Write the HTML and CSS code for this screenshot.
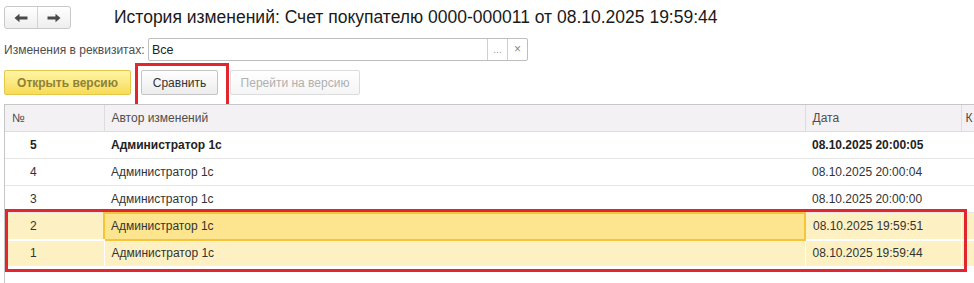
FILE: index.html
```html
<!DOCTYPE html>
<html>
<head>
    <meta charset="UTF-8">
    <title>История изменений</title>
    <link rel="stylesheet" href="styles.css">
</head>
<body>
    <div class="page">
        <!-- header: navigation and title -->
        <div class="top-bar">
            <div class="nav-group">
                <button class="nav-btn">
                    <svg width="14" height="10" viewBox="0 0 14 10"><path d="M0.5 5 L5.5 0.8 L5.5 3.6 L13.5 3.6 L13.5 6.4 L5.5 6.4 L5.5 9.2 Z" fill="#4a4a4a"/></svg>
                </button>
                <button class="nav-btn">
                    <svg width="14" height="10" viewBox="0 0 14 10"><path d="M13.5 5 L8.5 0.8 L8.5 3.6 L0.5 3.6 L0.5 6.4 L8.5 6.4 L8.5 9.2 Z" fill="#4a4a4a"/></svg>
                </button>
            </div>
            <h1 class="title">История изменений: Счет покупателю 0000-000011 от 08.10.2025 19:59:44</h1>
        </div>

        <div class="field-row">
            <label class="field-label">Изменения в реквизитах:</label>
            <div class="field-box">
                <span class="field-value">Все</span>
                <span class="field-btn dots">...</span>
                <span class="field-btn clear">×</span>
            </div>
        </div>

        <div class="toolbar">
            <button class="btn btn-default">Открыть версию</button>
            <div class="marked">
                <button class="btn">Сравнить</button>
                <div class="red-box compare-box"></div>
            </div>
            <button class="btn btn-disabled">Перейти на версию</button>
        </div>

        <div class="grid-wrap">
            <table class="grid">
                <colgroup>
                    <col style="width:99px">
                    <col style="width:701px">
                    <col style="width:156px">
                    <col style="width:14px">
                </colgroup>
                <thead>
                    <tr>
                        <th>№</th>
                        <th>Автор изменений</th>
                        <th>Дата</th>
                        <th class="cut">К</th>
                    </tr>
                </thead>
                <tbody>
                    <tr class="bold">
                        <td class="num">5</td>
                        <td>Администратор 1с</td>
                        <td>08.10.2025 20:00:05</td>
                        <td></td>
                    </tr>
                    <tr>
                        <td class="num">4</td>
                        <td>Администратор 1с</td>
                        <td>08.10.2025 20:00:04</td>
                        <td></td>
                    </tr>
                    <tr>
                        <td class="num">3</td>
                        <td>Администратор 1с</td>
                        <td>08.10.2025 20:00:00</td>
                        <td></td>
                    </tr>
                    <tr class="selected">
                        <td class="num">2</td>
                        <td class="current">Администратор 1с</td>
                        <td>08.10.2025 19:59:51</td>
                        <td></td>
                    </tr>
                    <tr class="selected">
                        <td class="num">1</td>
                        <td>Администратор 1с</td>
                        <td>08.10.2025 19:59:44</td>
                        <td></td>
                    </tr>
                </tbody>
            </table>
            <div class="red-box rows-box"></div>
        </div>
    </div>
</body>
</html>
```

FILE: styles.css
```css
html, body {
    margin: 0;
    padding: 0;
    background: #fff;
    overflow: hidden;
}
body {
    font: 12px "Liberation Sans", Arial, sans-serif;
    color: #333;
}
.page {
    padding: 6px 0 0 4px;
    height: 277px;
}

/* top bar */
.top-bar {
    display: flex;
    align-items: center;
    height: 23px;
}
.nav-group {
    display: flex;
    width: 67px;
    height: 23px;
    box-sizing: border-box;
    border: 1px solid #c9c9c9;
    border-radius: 3px;
    background: linear-gradient(#ffffff, #eeeeee);
}
.nav-btn {
    flex: 1;
    border: none;
    background: none;
    padding: 0;
    display: flex;
    align-items: center;
    justify-content: center;
}
.nav-btn + .nav-btn {
    border-left: 1px solid #d4d4d4;
}
.title {
    margin: 0 0 0 43px;
    font-size: 17.5px;
    font-weight: normal;
    color: #1a1a1a;
    white-space: nowrap;
}

/* requisites field */
.field-row {
    display: flex;
    align-items: center;
    margin-top: 9px;
    height: 23px;
}
.field-label {
    width: 144px;
    color: #4d4d4d;
    white-space: nowrap;
}
.field-box {
    display: flex;
    width: 380px;
    height: 23px;
    box-sizing: border-box;
    border: 1px solid #bdbdbd;
    border-radius: 2px;
}
.field-value {
    flex: 1;
    padding: 4px 3px 0 3px;
    color: #222;
    font-size: 12.5px;
}
.field-btn {
    width: 19px;
    border-left: 1px solid #d0d0d0;
    color: #999;
    text-align: center;
    font-size: 10px;
    line-height: 21px;
}
.field-btn.clear {
    font-size: 12px;
    color: #888;
}

/* buttons */
.toolbar {
    display: flex;
    align-items: center;
    margin-top: 9px;
    height: 25px;
}
.btn {
    height: 25px;
    box-sizing: border-box;
    border: 1px solid #c4c4c4;
    border-radius: 2px;
    background: linear-gradient(#ffffff, #ececec);
    font: 12px "Liberation Sans", Arial, sans-serif;
    color: #333;
    padding: 0;
    width: 77px;
}
.btn-default {
    width: 127px;
    border-color: #e3c84a;
    background: linear-gradient(#fff4a8, #f7dc55);
    color: #8f8136;
    font-weight: bold;
    margin-right: 10px;
}
.btn-disabled {
    width: 130px;
    margin-left: 12px;
    border-color: #dcdcdc;
    background: linear-gradient(#ffffff, #f5f5f5);
    color: #b0b0b0;
}
.marked {
    position: relative;
}
.red-box {
    position: absolute;
    box-sizing: border-box;
    border: 3px solid #e3262d;
    pointer-events: none;
}
.compare-box {
    left: -6px;
    top: -7px;
    width: 94px;
    height: 44px;
}

/* grid */
.grid-wrap {
    position: relative;
    margin-top: 9px;
    height: 180px;
    border-left: 1px solid #c6c6c6;
}
.grid {
    border-collapse: collapse;
    table-layout: fixed;
    width: 970px;
}
.grid th {
    height: 27px;
    box-sizing: border-box;
    padding: 0 7px;
    text-align: left;
    font-weight: normal;
    color: #4d4d4d;
    background: #f4f1f4;
    border-top: 1px solid #c6c6c6;
    border-bottom: 1px solid #dddddd;
    border-left: 1px solid #dddddd;
    white-space: nowrap;
    overflow: hidden;
}
.grid th:first-child {
    border-left: none;
}
.grid th.cut {
    padding: 0 0 0 4px;
}
.grid td {
    height: 27px;
    box-sizing: border-box;
    padding: 0 7px;
    border-bottom: 1px solid #e6e6e6;
    white-space: nowrap;
    color: #333;
}
.grid td.num {
    padding-left: 25px;
}
.grid tr.bold td {
    font-weight: bold;
    color: #222;
}
.grid tr.selected td {
    background: #fdf0c2;
    border-bottom: 2px solid #ffffff;
    border-left: 1px solid #ffffff;
}
.grid tr.selected td:first-child {
    border-left: none;
}
.grid tr.selected td.current {
    background: #fce58e;
    border: 2px solid #f4c53a;
    padding-left: 6px;
}
.rows-box {
    left: 0;
    top: 105px;
    width: 962px;
    height: 63px;
}
```
